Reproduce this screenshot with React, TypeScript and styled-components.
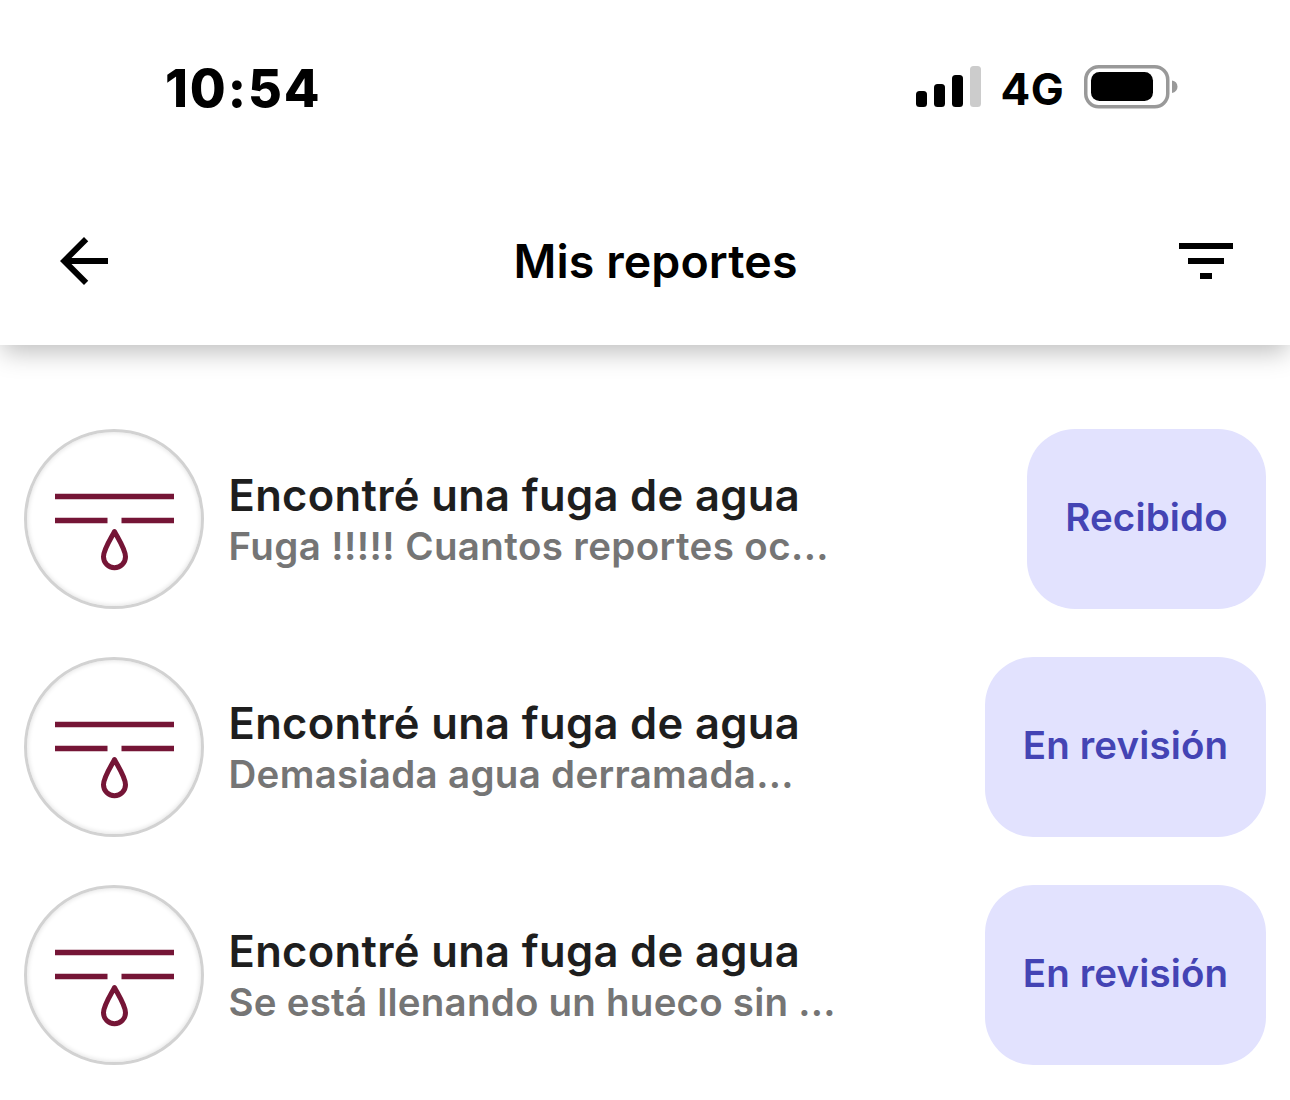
import React from "react";
import styled, { createGlobalStyle } from "styled-components";

const GlobalStyle = createGlobalStyle`
  * {
    box-sizing: border-box;
  }
  body {
    margin: 0;
    background: #fff;
    font-family: Inter, "Liberation Sans", sans-serif;
  }
`;

const Screen = styled.div`
  width: 1290px;
  height: 1100px;
  overflow: hidden;
  background: #fff;
`;

const Header = styled.header`
  height: 345px;
  background: #fff;
  box-shadow: 0 9px 24px -2px rgba(0, 0, 0, 0.26);
`;

const StatusBar = styled.div`
  height: 176px;
  padding: 0 112px 2px 165px;
  display: flex;
  align-items: center;
  justify-content: space-between;
`;

const Time = styled.span`
  padding-top: 3px;
  font-size: 52px;
  line-height: 60px;
  font-weight: 800;
  letter-spacing: 1.9px;
`;

const Indicators = styled.div`
  display: flex;
  align-items: center;
`;

const Network = styled.span`
  margin: 3px 20px 0 19px;
  font-size: 44px;
  line-height: 50px;
  font-weight: 650;
  letter-spacing: 0.3px;
`;

const NavBar = styled.nav`
  height: 169px;
  padding: 0 57px 0 60px;
  display: grid;
  grid-template-columns: 54px 1fr 54px;
  align-items: center;
`;

const NavTitle = styled.h1`
  margin: 0;
  padding-left: 18px;
  text-align: center;
  font-size: 46.5px;
  line-height: 56px;
  font-weight: 580;
  letter-spacing: 0.1px;
`;

const IconButton = styled.button`
  padding: 0;
  border: none;
  background: none;
  display: flex;
`;

const ReportList = styled.ol`
  margin: 0;
  padding: 84px 24px 0;
  list-style: none;
  display: flex;
  flex-direction: column;
  gap: 48px;
`;

const ReportItem = styled.li`
  height: 180px;
  display: flex;
  align-items: center;
`;

const Avatar = styled.div`
  width: 180px;
  height: 180px;
  flex: none;
  border: 3px solid #d2d2d2;
  border-radius: 50%;
  box-shadow: inset 0 0 4px 1px rgba(0, 0, 0, 0.1);
  > svg {
    display: block;
  }
`;

const Info = styled.div`
  flex: 1;
  min-width: 0;
  padding: 4px 0 0 24.5px;
  line-height: 51px;
  white-space: nowrap;
`;

const ReportTitle = styled.div`
  font-size: 43.5px;
  font-weight: 580;
  letter-spacing: 0.33px;
  color: #1e1e1e;
`;

const Description = styled.div<{ $spacing: number }>`
  font-size: 38.5px;
  font-weight: 580;
  letter-spacing: ${(p) => p.$spacing}px;
  color: #757575;
`;

const Status = styled.div<{ $width: number }>`
  width: ${(p) => p.$width}px;
  height: 180px;
  padding-bottom: 4px;
  flex: none;
  display: flex;
  align-items: center;
  justify-content: center;
  border-radius: 48px;
  background: #e2e2fe;
  color: #4444b4;
  font-size: 38.5px;
  font-weight: 580;
  letter-spacing: 0.15px;
`;

const reports = [
  { id: 1, text: "Fuga !!!!! Cuantos reportes oc...", spacing: 0.39, status: "Recibido", width: 239 },
  { id: 2, text: "Demasiada agua derramada...", spacing: 0.3, status: "En revisión", width: 281 },
  { id: 3, text: "Se está llenando un hueco sin ...", spacing: 0.22, status: "En revisión", width: 281 },
];

const Signal = () => (
  <svg width="66" height="42" viewBox="0 0 66 42">
    <rect x="0" y="25" width="11" height="16" rx="3.5" />
    <rect x="18" y="18" width="11" height="23" rx="3.5" />
    <rect x="36" y="9" width="11" height="32" rx="3.5" />
    <rect x="54" y="0" width="11" height="41" rx="3.5" fill="#ccc" />
  </svg>
);

const Battery = () => (
  <svg width="94" height="44" viewBox="0 0 94 44">
    <rect x="1.75" y="1.75" width="82" height="40" rx="13" fill="none" stroke="#999" strokeWidth="3.5" />
    <rect x="7" y="7" width="62" height="29" rx="8.5" />
    <path d="M88 15.5c3.500.6 5.500 3 5.500 6.200s-2 5.600-5.500 6.200z" fill="#999" />
  </svg>
);

const BackIcon = () => (
  <svg width="48" height="48" viewBox="4 4 16 16">
    <path d="M20 11H7.830l5.590-5.590L12 4l-8 8 8 8 1.410-1.410L7.830 13H20v-2z" />
  </svg>
);

const FilterIcon = () => (
  <svg width="54" height="36" viewBox="0 0 54 36">
    <path d="M0 0h54v6H0zM9 15h36v6H9zM21 30h12v6H21z" />
  </svg>
);

const LeakIcon = () => (
  <svg width="174" height="174" viewBox="0 0 174 174" fill="none" stroke="#751536" strokeWidth="5.5">
    <path d="M28 64.500h119M28 88.500h52.500M94.500 88.500H147" />
    <path
      d="M87.500 99.500c-2 4.500-11 17.500-11 25.300a11 11 0 0 0 22 0c0-7.800-9-20.800-11-25.300z"
      strokeWidth="5"
      strokeLinejoin="round"
    />
  </svg>
);

function App() {
  return (
    <Screen>
      <GlobalStyle />
      <Header>
        <StatusBar>
          <Time>10:54</Time>
          <Indicators>
            <Signal />
            <Network>4G</Network>
            <Battery />
          </Indicators>
        </StatusBar>
        <NavBar>
          <IconButton aria-label="Volver">
            <BackIcon />
          </IconButton>
          <NavTitle>Mis reportes</NavTitle>
          <IconButton aria-label="Filtrar">
            <FilterIcon />
          </IconButton>
        </NavBar>
      </Header>
      <ReportList>
        {reports.map((report) => (
          <ReportItem key={report.id}>
            <Avatar>
              <LeakIcon />
            </Avatar>
            <Info>
              <ReportTitle>Encontré una fuga de agua</ReportTitle>
              <Description $spacing={report.spacing}>{report.text}</Description>
            </Info>
            <Status $width={report.width}>{report.status}</Status>
          </ReportItem>
        ))}
      </ReportList>
    </Screen>
  );
}

export default App;
